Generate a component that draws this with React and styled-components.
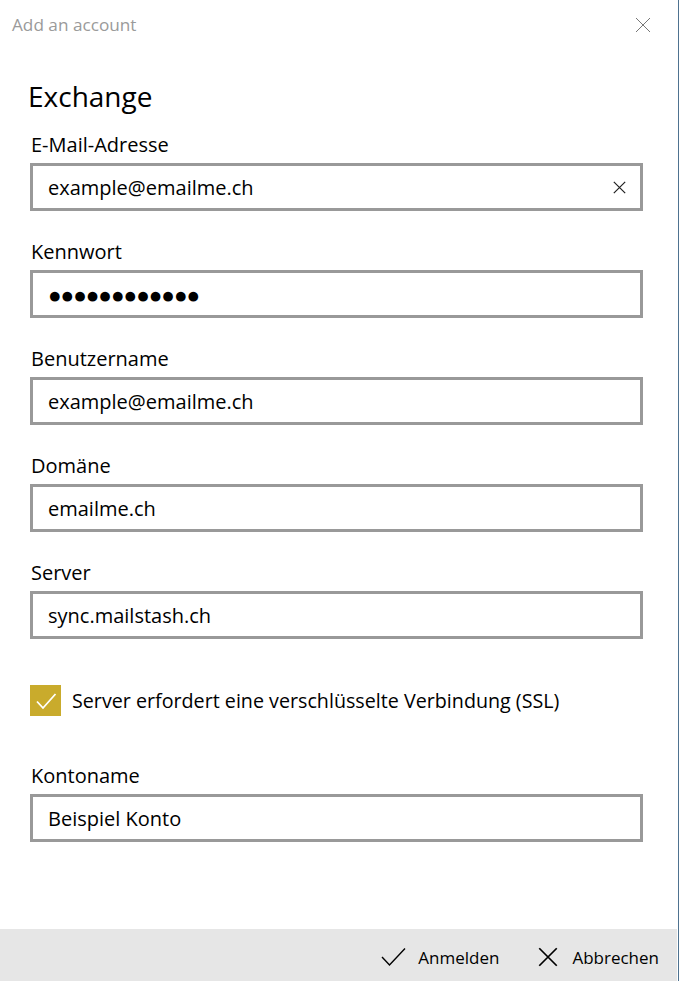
import React from "react";
import styled, { createGlobalStyle } from "styled-components";

const GlobalStyle = createGlobalStyle`
  html, body {
    margin: 0;
    padding: 0;
    background: #fff;
  }
  body {
    font-family: "Open Sans", "Noto Sans", Arial, sans-serif;
    color: #000;
  }
`;

const Window = styled.div`
  width: 679px;
  height: 981px;
  box-sizing: border-box;
  border-right: 1px solid #4e7290;
  display: flex;
  flex-direction: column;
  background: #fff;
  overflow: hidden;
`;

const TitleBar = styled.div`
  height: 49px;
  display: flex;
  align-items: center;
  justify-content: space-between;
  padding: 0 27px 0 12px;
`;

const WindowTitle = styled.span`
  font-size: 17.2px;
  color: #9a9a9a;
`;

const Body = styled.div`
  flex: 1;
  padding: 27px 35px 0 30px;
  display: flex;
  flex-direction: column;
`;

const Heading = styled.h1`
  margin: 0 0 16px -2px;
  font-size: 28px;
  font-weight: 400;
  line-height: 40px;
`;

const Field = styled.div`
  display: flex;
  flex-direction: column;
  margin-bottom: ${({ gap }) => gap ?? 28}px;
`;

const Label = styled.label`
  font-size: 20px;
  line-height: 26px;
  margin-bottom: 5px;
  padding-left: 1px;
`;

const InputBox = styled.div`
  height: 48px;
  box-sizing: border-box;
  border: 3px solid #999;
  display: flex;
  align-items: center;
  padding: 0 14px 0 15px;
`;

const Value = styled.span`
  flex: 1;
  font-size: ${({ secret }) => (secret ? "22.5px" : "20px")};
  letter-spacing: ${({ secret }) => (secret ? "-1px" : "0")};
`;

const CheckRow = styled.div`
  display: flex;
  align-items: center;
  gap: 11px;
  margin: 46px 0 47px;
`;

const CheckBox = styled.span`
  width: 31px;
  height: 31px;
  flex: none;
  background: #c9ab2c;
  display: flex;
  align-items: center;
  justify-content: center;
`;

const CheckLabel = styled.span`
  font-size: 19.7px;
`;

const Footer = styled.div`
  height: 52px;
  box-sizing: border-box;
  margin-right: 1px;
  padding: 4px 18px 0 0;
  background: #e6e6e6;
  display: flex;
  align-items: center;
  justify-content: flex-end;
  gap: 39px;
`;

const FooterButton = styled.button`
  border: none;
  background: none;
  padding: 0;
  display: flex;
  align-items: center;
  gap: ${({ gap }) => gap}px;
  font-family: inherit;
  font-size: 17px;
  color: #000;
  cursor: pointer;
`;

const CloseIcon = ({ size = 16, color = "#777", width = 1 }) => (
  <svg width={size} height={size} viewBox="0 0 16 16">
    <path d="M1 1 L15 15 M15 1 L1 15" stroke={color} strokeWidth={width} fill="none" />
  </svg>
);

const CheckIcon = ({ color = "#000", width = 1.4 }) => (
  <svg width="25" height="20" viewBox="0 0 25 20">
    <path d="M1 10 L8.5 18 L24 1.5" stroke={color} strokeWidth={width} fill="none" />
  </svg>
);

const fields = [
  { label: "E-Mail-Adresse", value: "example@emailme.ch", clear: true },
  { label: "Kennwort", value: "●●●●●●●●●●●●", secret: true },
  { label: "Benutzername", value: "example@emailme.ch" },
  { label: "Domäne", value: "emailme.ch" },
  { label: "Server", value: "sync.mailstash.ch", gap: 0 },
];

const TextField = ({ label, value, secret, clear, gap }) => (
  <Field gap={gap}>
    <Label>{label}</Label>
    <InputBox>
      <Value secret={secret}>{value}</Value>
      {clear && <CloseIcon size={13} color="#222" width={1.5} />}
    </InputBox>
  </Field>
);

export default function App() {
  return (
    <>
      <GlobalStyle />
      <Window>
        <TitleBar>
          <WindowTitle>Add an account</WindowTitle>
          <CloseIcon />
        </TitleBar>
        <Body>
          <Heading>Exchange</Heading>
          {fields.map((f) => (
            <TextField key={f.label} {...f} />
          ))}
          <CheckRow>
            <CheckBox>
              <svg width="22" height="18" viewBox="0 0 22 18">
                <path d="M2 9.5 L8 16 L20.5 2" stroke="#fff" strokeWidth="1.8" fill="none" />
              </svg>
            </CheckBox>
            <CheckLabel>Server erfordert eine verschlüsselte Verbindung (SSL)</CheckLabel>
          </CheckRow>
          <TextField label="Kontoname" value="Beispiel Konto" />
        </Body>
        <Footer>
          <FooterButton gap={12}>
            <CheckIcon />
            Anmelden
          </FooterButton>
          <FooterButton gap={14}>
            <CloseIcon size={20} color="#000" width={1.4} />
            Abbrechen
          </FooterButton>
        </Footer>
      </Window>
    </>
  );
}
